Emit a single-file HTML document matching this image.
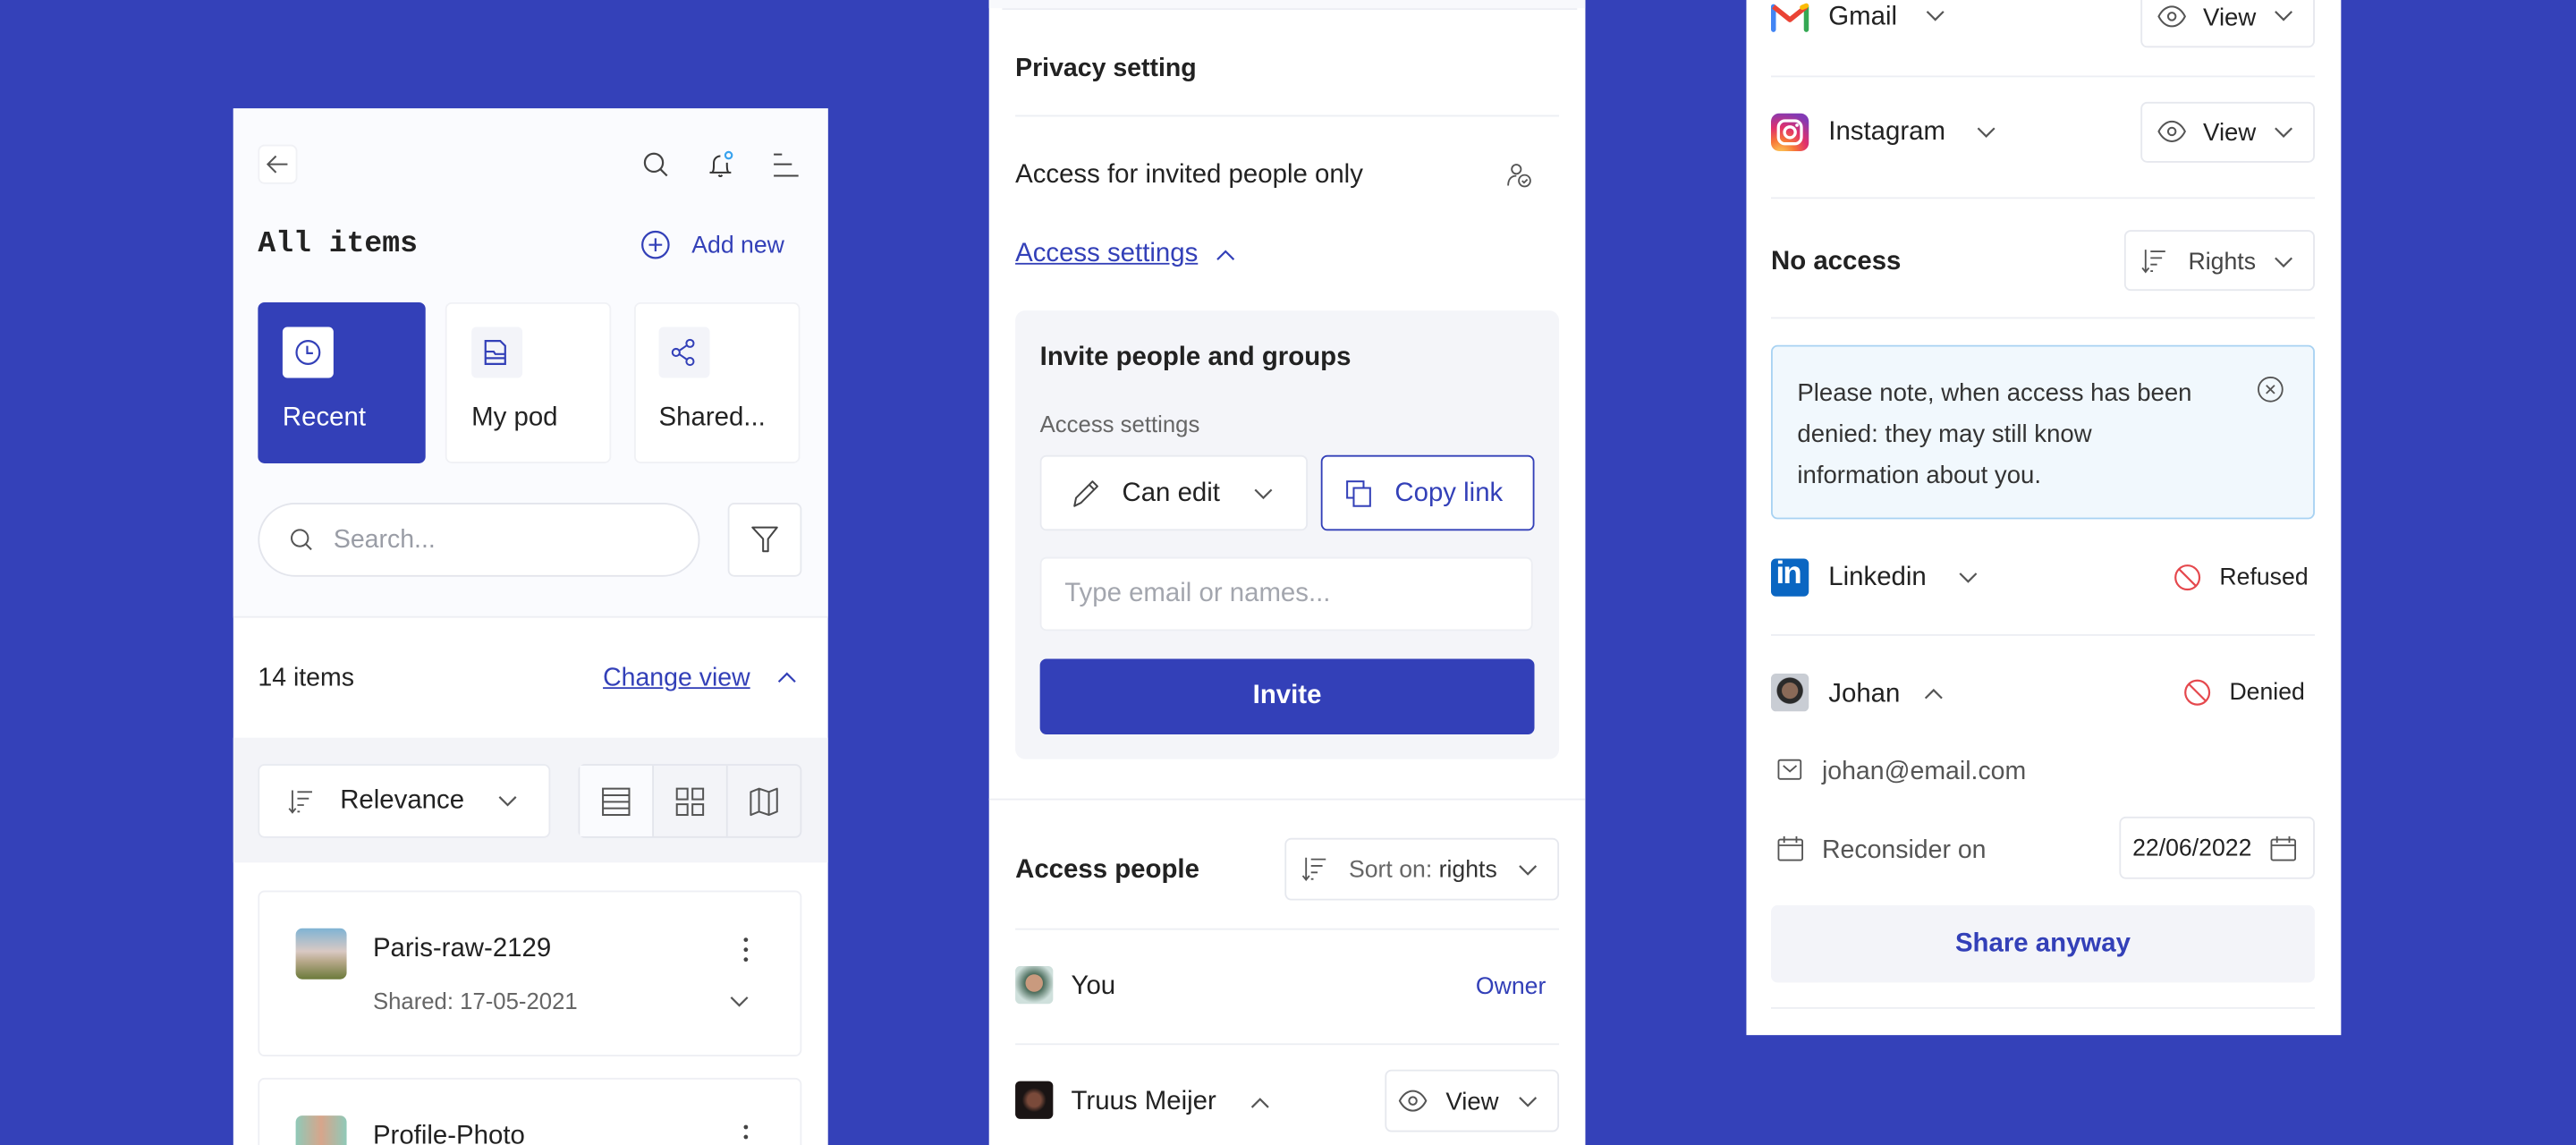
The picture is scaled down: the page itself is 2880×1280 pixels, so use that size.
<!DOCTYPE html>
<html><head><meta charset="utf-8"><style>
*{margin:0;padding:0;box-sizing:border-box}
html,body{width:2880px;height:1280px;overflow:hidden;background:#3441b9}
#s{position:absolute;left:0;top:0;width:1568px;height:697px;overflow:hidden;transform:scale(1.836735);transform-origin:0 0;font-family:"Liberation Sans",sans-serif;color:#222}
.a{position:absolute}
.t{position:absolute;white-space:nowrap;line-height:1;transform:translateY(-50%)}
.box{position:absolute;background:#fff;border:1px solid #e3e5ec;border-radius:4px}
.ln{position:absolute;height:1px;background:#eceef3}
.blue{color:#3340b8}
svg{position:absolute;overflow:visible}
</style></head><body><div id="s">

<!-- LEFT PANEL -->
<div class="a" style="left:142px;top:66px;width:362px;height:631px;background:#fff"></div>
<div class="a" style="left:142px;top:66px;width:362px;height:309px;background:#fafbfe"></div>
<div class="box" style="left:157px;top:88px;width:24px;height:24px;border-color:#f0f1f5"></div>
<svg style="left:162px;top:93px" width="14" height="14"><path d="M13 7H1M6 2L1 7l5 5" fill="none" stroke="#555" stroke-width="1.1"/></svg>
<svg style="left:391px;top:92px" width="16" height="16"><circle cx="7" cy="7" r="5.5" fill="none" stroke="#444" stroke-width="1.2"/><path d="M11 11l4 4" stroke="#444" stroke-width="1.2"/></svg>
<svg style="left:430px;top:91px" width="18" height="18"><path d="M2 14h13M3.5 14c1-1 1-3 1-6a4 4 0 0 1 4-4M13.5 14c-1-1-1-3-1-6M7.5 15.5c.5 1 1.5 1 2 0" fill="none" stroke="#333" stroke-width="1.1"/><circle cx="13.5" cy="3.5" r="2" fill="none" stroke="#3aa3ee" stroke-width="1.2"/></svg>
<svg style="left:469px;top:93px" width="18" height="16"><path d="M2 1h5M2 7h11M2 14h15" stroke="#444" stroke-width="1.1"/></svg>
<div class="t" style="left:157px;top:149px;font-family:'Liberation Mono',monospace;font-size:18px;font-weight:bold;color:#222">All items</div>
<svg style="left:390px;top:140px" width="18" height="18"><circle cx="9" cy="9" r="8" fill="none" stroke="#3340b8" stroke-width="1.2"/><path d="M9 5v8M5 9h8" stroke="#3340b8" stroke-width="1.2"/></svg>
<div class="t blue" style="left:421px;top:150px;font-size:14.5px">Add new</div>

<div class="a" style="left:157px;top:184px;width:102px;height:98px;background:#3340b8;border-radius:4px"></div>
<div class="a" style="left:172px;top:199px;width:31px;height:31px;background:#fff;border-radius:3px"></div>
<svg style="left:179px;top:206px" width="17" height="17"><circle cx="8.5" cy="8.5" r="7" fill="none" stroke="#3340b8" stroke-width="1.2"/><path d="M8 4.5v4.5h3.5" fill="none" stroke="#3340b8" stroke-width="1.2"/></svg>
<div class="t" style="left:172px;top:255px;font-size:16px;color:#fff">Recent</div>
<div class="box" style="left:271px;top:184px;width:101px;height:98px;border-color:#f0f1f5"></div>
<div class="a" style="left:287px;top:199px;width:31px;height:31px;background:#f3f4f9;border-radius:3px"></div>
<svg style="left:294px;top:206px" width="17" height="17"><path d="M1.5 1.5h9l3 3v11h-12z M1.5 8h5l1 1.5h6 M1.5 12h12" fill="none" stroke="#3340b8" stroke-width="1.2"/></svg>
<div class="t" style="left:287px;top:255px;font-size:16px">My pod</div>
<div class="box" style="left:386px;top:184px;width:101px;height:98px;border-color:#f0f1f5"></div>
<div class="a" style="left:401px;top:199px;width:31px;height:31px;background:#f3f4f9;border-radius:3px"></div>
<svg style="left:408px;top:206px" width="17" height="17"><circle cx="12" cy="3" r="2.2" fill="none" stroke="#3340b8" stroke-width="1.1"/><circle cx="3.5" cy="8.5" r="2.2" fill="none" stroke="#3340b8" stroke-width="1.1"/><circle cx="12" cy="14" r="2.2" fill="none" stroke="#3340b8" stroke-width="1.1"/><path d="M5.5 7.4l4.6-3.2M5.5 9.6l4.6 3.2" stroke="#3340b8" stroke-width="1.1"/></svg>
<div class="t" style="left:401px;top:255px;font-size:16px">Shared...</div>

<div class="a" style="left:157px;top:306px;width:269px;height:45px;background:#fff;border:1px solid #e3e5ec;border-radius:23px"></div>
<svg style="left:176px;top:321px" width="16" height="16"><circle cx="6.5" cy="6.5" r="5" fill="none" stroke="#555" stroke-width="1.1"/><path d="M10 10l3.5 3.5" stroke="#555" stroke-width="1.1"/></svg>
<div class="t" style="left:203px;top:329px;font-size:15.5px;color:#9a9da6">Search...</div>
<div class="box" style="left:443px;top:306px;width:45px;height:45px;border-color:#e6e8ee"></div>
<svg style="left:457px;top:320px" width="18" height="18"><path d="M1 1h15l-5.5 7v7.5h-3V8z" fill="none" stroke="#444" stroke-width="1.1" stroke-linejoin="round"/></svg>
<div class="ln" style="left:142px;top:375px;width:362px"></div>
<div class="t" style="left:157px;top:413px;font-size:15.5px">14 items</div>
<div class="t blue" style="left:367px;top:413px;font-size:15.5px;text-decoration:underline">Change view</div>
<svg style="left:473px;top:408px" width="12" height="8"><path d="M1 7l5-5 5 5" fill="none" stroke="#3340b8" stroke-width="1.2"/></svg>

<div class="a" style="left:142px;top:449px;width:362px;height:76px;background:#f3f4f8"></div>
<div class="box" style="left:157px;top:465px;width:178px;height:45px;border-color:#e8eaf0"></div>
<svg style="left:176px;top:480px" width="16" height="16"><path d="M2 1v13M0 12l2 2.5 2-2.5M5 2h9M5 6h7M5 10h4M5 14h1.5" fill="none" stroke="#555" stroke-width="1"/></svg>
<div class="t" style="left:207px;top:488px;font-size:16px">Relevance</div>
<svg style="left:303px;top:484px" width="12" height="8"><path d="M1 1l5 5 5-5" fill="none" stroke="#555" stroke-width="1.2"/></svg>
<div class="box" style="left:352px;top:465px;width:136px;height:45px;background:#f3f4f8;border-color:#e3e5ec"></div>
<div class="a" style="left:353px;top:466px;width:44px;height:43px;background:#fafbfe"></div>
<div class="a" style="left:397px;top:466px;width:1px;height:43px;background:#e3e5ec"></div>
<div class="a" style="left:442px;top:466px;width:1px;height:43px;background:#e3e5ec"></div>
<svg style="left:366px;top:479px" width="18" height="18"><rect x="1" y="1" width="16" height="16" fill="none" stroke="#555" stroke-width="1.1"/><path d="M1 5h16M1 9h16M1 13h16" stroke="#555" stroke-width="1.1"/></svg>
<svg style="left:411px;top:479px" width="18" height="18"><rect x="1" y="1" width="6.5" height="6.5" fill="none" stroke="#555" stroke-width="1.1"/><rect x="10.5" y="1" width="6.5" height="6.5" fill="none" stroke="#555" stroke-width="1.1"/><rect x="1" y="10.5" width="6.5" height="6.5" fill="none" stroke="#555" stroke-width="1.1"/><rect x="10.5" y="10.5" width="6.5" height="6.5" fill="none" stroke="#555" stroke-width="1.1"/></svg>
<svg style="left:456px;top:479px" width="18" height="18"><path d="M1 3l5-2 6 2 5-2v14l-5 2-6-2-5 2zM6 1v14M12 3v14" fill="none" stroke="#555" stroke-width="1.1" stroke-linejoin="round"/></svg>

<div class="box" style="left:157px;top:542px;width:331px;height:101px;border-color:#eeeff4"></div>
<div class="a" style="left:180px;top:565px;width:31px;height:31px;border-radius:4px;background:linear-gradient(180deg,#7fb3d4 0%,#d9c9c4 45%,#b7a88a 65%,#6b7a3a 100%)"></div>
<div class="t" style="left:227px;top:578px;font-size:16px">Paris-raw-2129</div>
<div class="t" style="left:227px;top:609px;font-size:14px;color:#666">Shared: 17-05-2021</div>
<svg style="left:452px;top:570px" width="4" height="16"><circle cx="2" cy="2" r="1.3" fill="#444"/><circle cx="2" cy="8" r="1.3" fill="#444"/><circle cx="2" cy="14" r="1.3" fill="#444"/></svg>
<svg style="left:444px;top:606px" width="12" height="8"><path d="M1 1l5 5 5-5" fill="none" stroke="#555" stroke-width="1.2"/></svg>
<div class="box" style="left:157px;top:656px;width:331px;height:60px;border-color:#eeeff4"></div>
<div class="a" style="left:180px;top:679px;width:31px;height:31px;border-radius:4px;background:linear-gradient(90deg,#8fc9b8,#d7a58b 50%,#8fc9b8)"></div>
<div class="t" style="left:227px;top:692px;font-size:16px">Profile-Photo</div>
<svg style="left:452px;top:684px" width="4" height="16"><circle cx="2" cy="2" r="1.3" fill="#444"/><circle cx="2" cy="8" r="1.3" fill="#444"/></svg>

<!-- MIDDLE PANEL -->
<div class="a" style="left:602px;top:0;width:363px;height:697px;background:#fff"></div>
<div class="a" style="left:602px;top:0;width:363px;height:5px;background:#f8f9fc"></div>
<div class="ln" style="left:610px;top:5px;width:350px"></div>
<div class="t" style="left:618px;top:42px;font-size:15.5px;font-weight:bold;color:#222">Privacy setting</div>
<div class="ln" style="left:618px;top:70px;width:331px"></div>
<div class="t" style="left:618px;top:107px;font-size:16px">Access for invited people only</div>
<svg style="left:917px;top:99px" width="16" height="16"><circle cx="6" cy="4" r="2.8" fill="none" stroke="#555" stroke-width="1"/><path d="M1 14c0-4 2-6 5-6" fill="none" stroke="#555" stroke-width="1"/><circle cx="11" cy="11" r="3.5" fill="none" stroke="#555" stroke-width="1"/><path d="M9.5 11l1.2 1.2 2-2" fill="none" stroke="#555" stroke-width="1"/></svg>
<div class="t blue" style="left:618px;top:155px;font-size:16px;text-decoration:underline">Access settings</div>
<svg style="left:740px;top:151px" width="12" height="8"><path d="M1 7l5-5 5 5" fill="none" stroke="#3340b8" stroke-width="1.2"/></svg>

<div class="a" style="left:618px;top:189px;width:331px;height:273px;background:#f4f5f9;border-radius:6px"></div>
<div class="t" style="left:633px;top:218px;font-size:16px;font-weight:bold">Invite people and groups</div>
<div class="t" style="left:633px;top:258px;font-size:14px;color:#666">Access settings</div>
<div class="box" style="left:633px;top:277px;width:163px;height:46px;border-color:#e8eaf0"></div>
<svg style="left:652px;top:291px" width="18" height="18"><path d="M2 17l1-5L13 2l3 3L6 15zM11 4l3 3" fill="none" stroke="#444" stroke-width="1.1" stroke-linejoin="round"/></svg>
<div class="t" style="left:683px;top:301px;font-size:16px">Can edit</div>
<svg style="left:763px;top:297px" width="12" height="8"><path d="M1 1l5 5 5-5" fill="none" stroke="#555" stroke-width="1.2"/></svg>
<div class="a" style="left:804px;top:277px;width:130px;height:46px;background:#fff;border:1.2px solid #3340b8;border-radius:4px"></div>
<svg style="left:819px;top:292px" width="17" height="17"><rect x="1" y="1" width="10" height="10" fill="none" stroke="#3340b8" stroke-width="1.1"/><rect x="5" y="5" width="10" height="11" fill="#fff" stroke="#3340b8" stroke-width="1.1"/></svg>
<div class="t blue" style="left:849px;top:301px;font-size:16px">Copy link</div>
<div class="box" style="left:633px;top:339px;width:300px;height:45px;border-color:#eceef3"></div>
<div class="t" style="left:648px;top:362px;font-size:16px;color:#a3a6ae">Type email or names...</div>
<div class="a" style="left:633px;top:401px;width:301px;height:46px;background:#3340b8;border-radius:4px"></div>
<div class="t" style="left:633px;top:424px;width:301px;text-align:center;font-size:16px;font-weight:bold;color:#fff">Invite</div>

<div class="ln" style="left:602px;top:486px;width:363px"></div>
<div class="t" style="left:618px;top:530px;font-size:16px;font-weight:bold">Access people</div>
<div class="box" style="left:782px;top:510px;width:167px;height:38px;border-color:#e6e8ee"></div>
<svg style="left:793px;top:521px" width="16" height="16"><path d="M2 1v13M0 12l2 2.5 2-2.5M5 2h9M5 6h7M5 10h4M5 14h1.5" fill="none" stroke="#555" stroke-width="1"/></svg>
<div class="t" style="left:821px;top:530px;font-size:14.5px;color:#666">Sort on: <span style="color:#333">rights</span></div>
<svg style="left:924px;top:526px" width="12" height="8"><path d="M1 1l5 5 5-5" fill="none" stroke="#555" stroke-width="1.2"/></svg>
<div class="ln" style="left:618px;top:565px;width:331px"></div>
<div class="a" style="left:618px;top:588px;width:23px;height:23px;border-radius:3px;background:radial-gradient(circle at 50% 45%,#c99a7e 0 30%,#4a6b5a 32%,#cfe0dc 70%)"></div>
<div class="t" style="left:652px;top:601px;font-size:16px">You</div>
<div class="t blue" style="left:941px;top:601px;font-size:14.5px;transform:translate(-100%,-50%)">Owner</div>
<div class="ln" style="left:618px;top:635px;width:331px"></div>
<div class="a" style="left:618px;top:658px;width:23px;height:23px;border-radius:3px;background:radial-gradient(circle at 50% 50%,#7a4a3a 0 25%,#1a1414 45%)"></div>
<div class="t" style="left:652px;top:671px;font-size:16px">Truus Meijer</div>
<svg style="left:761px;top:667px" width="12" height="8"><path d="M1 7l5-5 5 5" fill="none" stroke="#555" stroke-width="1.2"/></svg>
<div class="box" style="left:843px;top:651px;width:106px;height:38px;border-color:#e6e8ee"></div>
<svg style="left:851px;top:662px" width="18" height="16"><path d="M1 8c2-4 5-6 8-6s6 2 8 6c-2 4-5 6-8 6s-6-2-8-6z" fill="none" stroke="#555" stroke-width="1.1"/><circle cx="9" cy="8" r="2.3" fill="none" stroke="#555" stroke-width="1.1"/></svg>
<div class="t" style="left:880px;top:671px;font-size:15px">View</div>
<svg style="left:924px;top:667px" width="12" height="8"><path d="M1 1l5 5 5-5" fill="none" stroke="#555" stroke-width="1.2"/></svg>

<!-- RIGHT PANEL -->
<div class="a" style="left:1063px;top:0;width:362px;height:630px;background:#fff"></div>
<svg style="left:1078px;top:1px" width="23" height="18" viewBox="0 0 23 18"><path d="M1.5 17V3" stroke="#4285f4" stroke-width="3" stroke-linecap="round"/><path d="M21.5 17V3" stroke="#34a853" stroke-width="3" stroke-linecap="round"/><path d="M1.5 3l10 8 10-8" fill="none" stroke="#ea4335" stroke-width="3" stroke-linejoin="round"/><path d="M19 3.5l2.5-1" stroke="#fbbc04" stroke-width="3" stroke-linecap="round"/></svg>
<div class="t" style="left:1113px;top:11px;font-size:16px">Gmail</div>
<svg style="left:1172px;top:6px" width="12" height="8"><path d="M1 1l5 5 5-5" fill="none" stroke="#555" stroke-width="1.2"/></svg>
<div class="box" style="left:1303px;top:-10px;width:106px;height:39px;border-color:#e6e8ee"></div>
<svg style="left:1313px;top:2px" width="18" height="16"><path d="M1 8c2-4 5-6 8-6s6 2 8 6c-2 4-5 6-8 6s-6-2-8-6z" fill="none" stroke="#555" stroke-width="1.1"/><circle cx="9" cy="8" r="2.3" fill="none" stroke="#555" stroke-width="1.1"/></svg>
<div class="t" style="left:1341px;top:11px;font-size:15px">View</div>
<svg style="left:1384px;top:6px" width="12" height="8"><path d="M1 1l5 5 5-5" fill="none" stroke="#555" stroke-width="1.2"/></svg>
<div class="ln" style="left:1078px;top:46px;width:331px"></div>

<div class="a" style="left:1078px;top:69px;width:23px;height:23px;border-radius:5px;background:radial-gradient(circle at 25% 110%,#fdd55b 0,#f77737 30%,#e1306c 55%,#833ab4 85%)"></div>
<svg style="left:1078px;top:69px" width="23" height="23"><rect x="4.5" y="4.5" width="14" height="14" rx="4" fill="none" stroke="#fff" stroke-width="1.8"/><circle cx="11.5" cy="11.5" r="3.3" fill="none" stroke="#fff" stroke-width="1.8"/><circle cx="15.8" cy="7.2" r="1" fill="#fff"/></svg>
<div class="t" style="left:1113px;top:81px;font-size:16px">Instagram</div>
<svg style="left:1203px;top:77px" width="12" height="8"><path d="M1 1l5 5 5-5" fill="none" stroke="#555" stroke-width="1.2"/></svg>
<div class="box" style="left:1303px;top:62px;width:106px;height:37px;border-color:#e6e8ee"></div>
<svg style="left:1313px;top:72px" width="18" height="16"><path d="M1 8c2-4 5-6 8-6s6 2 8 6c-2 4-5 6-8 6s-6-2-8-6z" fill="none" stroke="#555" stroke-width="1.1"/><circle cx="9" cy="8" r="2.3" fill="none" stroke="#555" stroke-width="1.1"/></svg>
<div class="t" style="left:1341px;top:81px;font-size:15px">View</div>
<svg style="left:1384px;top:77px" width="12" height="8"><path d="M1 1l5 5 5-5" fill="none" stroke="#555" stroke-width="1.2"/></svg>
<div class="ln" style="left:1078px;top:120px;width:331px"></div>

<div class="t" style="left:1078px;top:160px;font-size:16px;font-weight:bold">No access</div>
<div class="box" style="left:1293px;top:140px;width:116px;height:37px;border-color:#e6e8ee"></div>
<svg style="left:1304px;top:151px" width="16" height="16"><path d="M2 1v13M0 12l2 2.5 2-2.5M5 2h9M5 6h7M5 10h4M5 14h1.5" fill="none" stroke="#555" stroke-width="1"/></svg>
<div class="t" style="left:1332px;top:160px;font-size:14.5px;color:#444">Rights</div>
<svg style="left:1384px;top:156px" width="12" height="8"><path d="M1 1l5 5 5-5" fill="none" stroke="#555" stroke-width="1.2"/></svg>
<div class="ln" style="left:1078px;top:193px;width:331px"></div>

<div class="a" style="left:1078px;top:210px;width:331px;height:106px;background:#f1f8fd;border:1px solid #a8d2f2;border-radius:4px"></div>
<div class="a" style="left:1094px;top:227px;white-space:nowrap;font-size:15px;line-height:25px;color:#333">Please note, when access has been<br>denied: they may still know<br>information about you.</div>
<svg style="left:1374px;top:229px" width="16" height="16"><circle cx="8" cy="8" r="7.3" fill="none" stroke="#555" stroke-width="1"/><path d="M5.5 5.5l5 5M10.5 5.5l-5 5" stroke="#555" stroke-width="1"/></svg>

<div class="a" style="left:1078px;top:340px;width:23px;height:23px;border-radius:3px;background:#0a66c2"></div>
<div class="a" style="left:1081px;top:339px;font-family:'Liberation Sans',sans-serif;font-weight:bold;font-size:19px;color:#fff;letter-spacing:-1px">in</div>
<div class="t" style="left:1113px;top:352px;font-size:16px">Linkedin</div>
<svg style="left:1192px;top:348px" width="12" height="8"><path d="M1 1l5 5 5-5" fill="none" stroke="#555" stroke-width="1.2"/></svg>
<svg style="left:1323px;top:343px" width="17" height="17"><circle cx="8.5" cy="8.5" r="7.3" fill="none" stroke="#e5484d" stroke-width="1.2"/><path d="M3.3 3.3l10.4 10.4" stroke="#e5484d" stroke-width="1.2"/></svg>
<div class="t" style="left:1351px;top:352px;font-size:14.5px">Refused</div>
<div class="ln" style="left:1078px;top:386px;width:331px"></div>

<div class="a" style="left:1078px;top:410px;width:23px;height:23px;border-radius:3px;background:radial-gradient(circle at 50% 45%,#8a6a58 0 28%,#2a2a2a 30% 45%,#c9cdd4 48%)"></div>
<div class="t" style="left:1113px;top:423px;font-size:16px">Johan</div>
<svg style="left:1171px;top:418px" width="12" height="8"><path d="M1 7l5-5 5 5" fill="none" stroke="#555" stroke-width="1.2"/></svg>
<svg style="left:1329px;top:413px" width="17" height="17"><circle cx="8.5" cy="8.5" r="7.3" fill="none" stroke="#e5484d" stroke-width="1.2"/><path d="M3.3 3.3l10.4 10.4" stroke="#e5484d" stroke-width="1.2"/></svg>
<div class="t" style="left:1357px;top:422px;font-size:14.5px">Denied</div>

<svg style="left:1082px;top:462px" width="15" height="13"><rect x="0.6" y="0.6" width="13.5" height="11.5" rx="1" fill="none" stroke="#555" stroke-width="1"/><path d="M3.5 4l4 3.5 4-3.5" fill="none" stroke="#555" stroke-width="1"/></svg>
<div class="t" style="left:1109px;top:470px;font-size:15.5px;color:#555">johan@email.com</div>
<svg style="left:1082px;top:508px" width="16" height="17"><rect x="0.6" y="3" width="14.5" height="12.5" rx="1" fill="none" stroke="#555" stroke-width="1"/><path d="M0.6 6.5h14.5M4 1v4M11.5 1v4" stroke="#555" stroke-width="1"/></svg>
<div class="t" style="left:1109px;top:518px;font-size:15.5px;color:#555">Reconsider on</div>
<div class="box" style="left:1290px;top:497px;width:119px;height:38px;border-color:#e6e8ee"></div>
<div class="t" style="left:1298px;top:517px;font-size:14.5px">22/06/2022</div>
<svg style="left:1382px;top:508px" width="16" height="17"><rect x="0.6" y="3" width="14.5" height="12.5" rx="1" fill="none" stroke="#555" stroke-width="1"/><path d="M0.6 6.5h14.5M4 1v4M11.5 1v4" stroke="#555" stroke-width="1"/></svg>
<div class="a" style="left:1078px;top:551px;width:331px;height:47px;background:#f3f4f9;border-radius:4px"></div>
<div class="t blue" style="left:1078px;top:575px;width:331px;text-align:center;font-size:16px;font-weight:bold">Share anyway</div>
<div class="ln" style="left:1078px;top:613px;width:331px"></div>

</div></body></html>
